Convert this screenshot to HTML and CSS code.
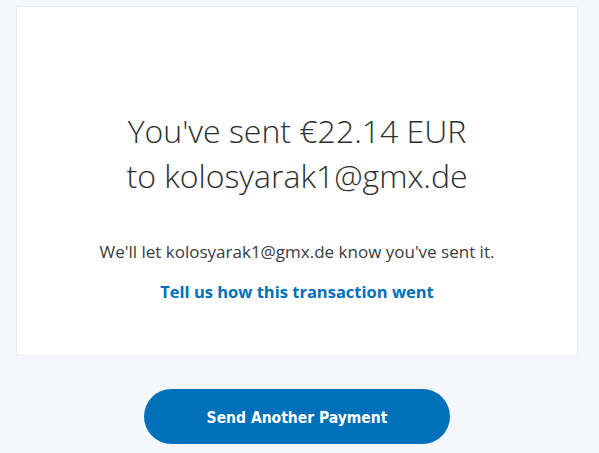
FILE: index.html
```html
<!DOCTYPE html>
<html lang="en">
<head>
<meta charset="utf-8">
<title>Payment sent</title>
<link rel="stylesheet" href="styles.css">
</head>
<body>
<main class="page">
  <section class="card">
    <h1 class="title">You've sent €22.14 EUR<br>to kolosyarak1@gmx.de</h1>
    <p class="note">We'll let kolosyarak1@gmx.de know you've sent it.</p>
    <a class="feedback" href="#">Tell us how this transaction went</a>
  </section>
  <div class="actions">
    <a class="btn" href="#">Send Another Payment</a>
  </div>
</main>
</body>
</html>
```
FILE: styles.css
```css
html, body {
  margin: 0;
  padding: 0;
  background: #f5f7fa;
}
body {
  font-family: "Open Sans", "Noto Sans", sans-serif;
  color: #2c2e2f;
}
.page {
  padding-top: 6px;
  padding-left: 16px;
  width: 562px;
}
.card {
  box-sizing: border-box;
  height: 350px;
  background: #fff;
  border: 1px solid #eaeced;
  display: flex;
  flex-direction: column;
  align-items: center;
  padding-top: 101px;
}
.title {
  margin: 0;
  font-weight: 300;
  font-size: 32px;
  line-height: 45px;
  text-align: center;
  color: #2c2e2f;
}
.note {
  margin: 42px 0 0;
  font-size: 17px;
  line-height: 24px;
  color: #3a3c3d;
}
.feedback {
  margin-top: 16px;
  font-size: 16.5px;
  line-height: 24px;
  font-weight: 700;
  color: #0070ba;
  text-decoration: none;
}
.actions {
  display: flex;
  justify-content: center;
  padding-top: 33px;
}
.btn {
  box-sizing: border-box;
  width: 306px;
  height: 55px;
  padding-top: 3px;
  border-radius: 28px;
  background: #0070ba;
  color: #fff;
  font-family: "DejaVu Sans Condensed", "DejaVu Sans", sans-serif;
  font-stretch: condensed;
  font-weight: 700;
  font-size: 15.5px;
  display: flex;
  align-items: center;
  justify-content: center;
  text-decoration: none;
}
```
